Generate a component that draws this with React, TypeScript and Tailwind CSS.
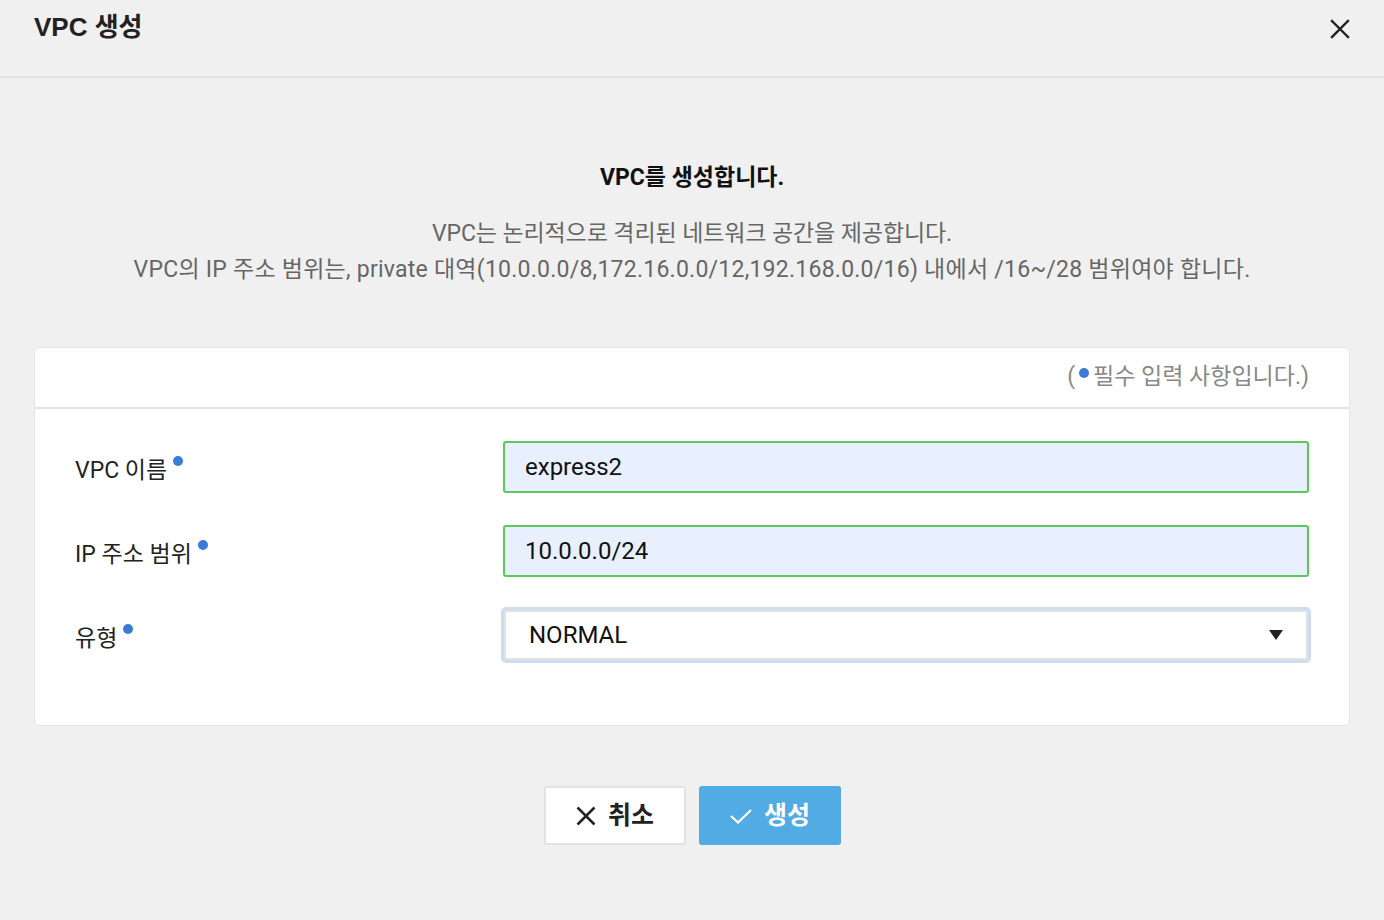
import React from "react";

const font = { fontFamily: 'Roboto, "Noto Sans CJK KR", sans-serif' };

function Dot({ className = "" }: { className?: string }) {
  return <span className={`inline-block w-[10px] h-[10px] rounded-full bg-[#3a7bd5] ${className}`} />;
}

function Label({ text }: { text: string }) {
  return (
    <div className="flex items-start text-[23px] text-[#222] leading-[30px] mt-[7px]">
      <span>{text}</span>
      <Dot className="ml-[6px] mt-[0px]" />
    </div>
  );
}

function TextField({ value }: { value: string }) {
  return (
    <div className="h-[52px] rounded-[3px] border-2 border-[#5bc85b] bg-[#e8f0fe] flex items-center pl-[20px] text-[24px] text-[#111]">
      {value}
    </div>
  );
}

export default function App() {
  return (
    <div className="min-h-screen bg-[#f0f0f0]" style={font}>
      {/* Header */}
      <div className="h-[78px] border-b-2 border-[#e2e2e2] flex items-start justify-between pl-[34px] pr-[32px] pt-[11px]">
        <h1
          className="text-[26px] font-bold text-[#222] leading-[32px]"
          style={{ fontFamily: '"Liberation Sans", "Noto Sans CJK KR", sans-serif' }}
        >
          VPC 생성
        </h1>
        <button className="mt-[6px] w-[24px] h-[24px] flex items-center justify-center">
          <svg width="20" height="20" viewBox="0 0 20 20" fill="none" stroke="#222" strokeWidth="2.4" strokeLinecap="square">
            <path d="M2 2 L18 18 M18 2 L2 18" />
          </svg>
        </button>
      </div>

      {/* Intro */}
      <div className="text-center">
        <div className="mt-[84px] text-[23px] font-bold text-[#111] leading-[32px]">VPC를 생성합니다.</div>
        <div className="mt-[22px] text-[23px] text-[#666] leading-[36px]">
          <p className="tracking-[-0.1px]">VPC는 논리적으로 격리된 네트워크 공간을 제공합니다.</p>
          <p className="tracking-[0.25px]">VPC의 IP 주소 범위는, private 대역(10.0.0.0/8,172.16.0.0/12,192.168.0.0/16) 내에서 /16~/28 범위여야 합니다.</p>
        </div>
      </div>

      {/* Form card */}
      <div className="mx-[34px] mt-[59px] bg-white rounded-[5px] border border-[#e4e4e4]">
        <div className="h-[61px] border-b-2 border-[#e4e4e4] flex items-center justify-end pr-[40px] text-[23px] text-[#888]">
          <span>(</span>
          <Dot className="ml-[4px] mr-[4px] mb-[10px]" />
          <span>필수 입력 사항입니다.)</span>
        </div>
        <div className="px-[40px] pt-[32px] pb-[62px] flex flex-col gap-[32px]">
          <div className="grid grid-cols-[428px_1fr] items-center">
            <Label text="VPC 이름" />
            <TextField value="express2" />
          </div>
          <div className="grid grid-cols-[428px_1fr] items-center">
            <Label text="IP 주소 범위" />
            <TextField value="10.0.0.0/24" />
          </div>
          <div className="grid grid-cols-[426px_1fr] items-center -mt-[2px]">
            <Label text="유형" />
            <div className="rounded-[5px] border-[3px] border-[#cddcf1] -mr-[2px]">
              <div className="h-[50px] border-2 border-[#e2e2e2] bg-white flex items-center justify-between pl-[23px] pr-[23px] text-[24px] text-[#111]">
                <span>NORMAL</span>
                <svg width="14" height="10" viewBox="0 0 14 10">
                  <path d="M0 0 H14 L7 10 Z" fill="#222" />
                </svg>
              </div>
            </div>
          </div>
        </div>
      </div>

      {/* Buttons */}
      <div className="mt-[60px] flex justify-center gap-[13px] pl-[1px]">
        <button className="w-[142px] h-[59px] bg-white border-2 border-[#e2e2e2] rounded-[3px] flex items-center justify-center gap-[12px] text-[25px] font-bold text-[#222]">
          <svg width="20" height="20" viewBox="0 0 20 20" fill="none" stroke="#222" strokeWidth="2.5">
            <path d="M1.5 1.5 L18.5 18.5 M18.5 1.5 L1.5 18.5" />
          </svg>
          <span>취소</span>
        </button>
        <button className="w-[142px] h-[59px] bg-[#52abe3] rounded-[3px] flex items-center justify-center gap-[12px] text-[25px] font-bold text-white">
          <svg width="22" height="18" viewBox="0 0 22 18" fill="none" stroke="#fff" strokeWidth="2.2">
            <path d="M1 9 L8 15.5 L21 3" />
          </svg>
          <span>생성</span>
        </button>
      </div>
    </div>
  );
}
